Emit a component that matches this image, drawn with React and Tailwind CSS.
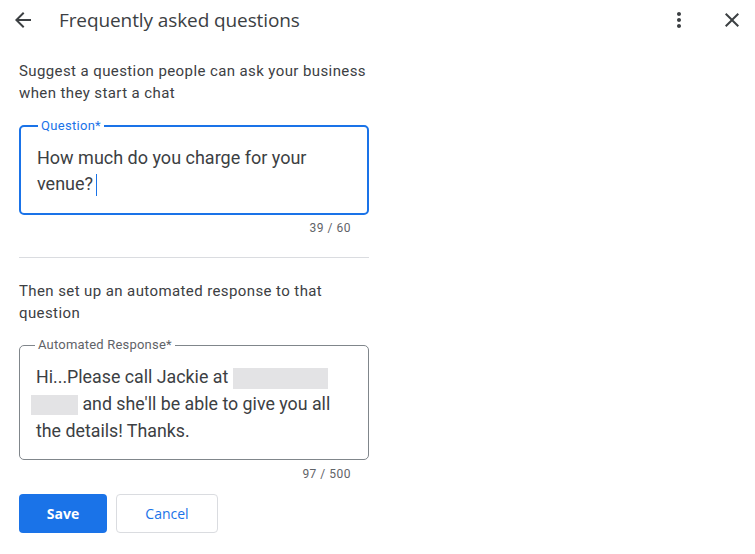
import React from 'react';

function BackArrow() {
  return (
    <svg width="24" height="24" viewBox="0 0 24 24" fill="#3c4043">
      <path d="M20 11H7.83l5.59-5.59L12 4l-8 8 8 8 1.41-1.41L7.83 13H20v-2z" />
    </svg>
  );
}

function MoreVert() {
  return (
    <svg width="24" height="24" viewBox="0 0 24 24" fill="#3c4043">
      <path d="M12 8c1.1 0 2-.9 2-2s-.9-2-2-2-2 .9-2 2 .9 2 2 2zm0 2c-1.1 0-2 .9-2 2s.9 2 2 2 2-.9 2-2-.9-2-2-2zm0 6c-1.1 0-2 .9-2 2s.9 2 2 2 2-.9 2-2-.9-2-2-2z" />
    </svg>
  );
}

function Close() {
  return (
    <svg width="24" height="24" viewBox="0 0 24 24" fill="#3c4043">
      <path d="M19 6.41L17.59 5 12 10.59 6.41 5 5 6.41 10.59 12 5 17.59 6.41 19 12 13.41 17.59 19 19 17.59 13.41 12z" />
    </svg>
  );
}

function Redacted({ className }) {
  return <span className={`inline-block align-middle bg-[#e3e3e5] blur-[0.6px] ${className}`} />;
}

export default function App() {
  return (
    <div className="w-[755px] h-[554px] bg-white font-['Roboto',sans-serif] text-[#3c4043] overflow-hidden">
      <header className="flex items-center h-[40px] pl-[8px] pr-[11px]">
        <button className="w-[30px] h-[30px] flex items-center justify-center">
          <BackArrow />
        </button>
        <h1 className="ml-[21px] text-[19px] font-['Open_Sans',sans-serif] text-[#3c4043] tracking-[-0.1px]">
          Frequently asked questions
        </h1>
        <div className="ml-auto flex items-center gap-[29px]">
          <MoreVert />
          <Close />
        </div>
      </header>

      <div className="w-[350px] ml-[19px] mt-[20px]">
        <p className="text-[15px] leading-[22px] tracking-[0.4px]">
          Suggest a question people can ask your business when they start a chat
        </p>

        <fieldset className="mt-[15px] border-2 border-[#1a73e8] rounded-[5px] px-[16px] pb-[16px] pt-[12px]">
          <legend className="ml-[1px] px-[3px] text-[13px] leading-[14px] tracking-[0.3px] text-[#1a73e8]">Question*</legend>
          <div className="text-[18px] leading-[26px] text-[#3c4043]">
            How much do you charge for your venue?<span className="inline-block w-px h-[22px] bg-[#1a73e8] align-middle ml-[3px]" />
          </div>
        </fieldset>
        <div className="text-right pr-[18px] mt-[4px] text-[12px] text-[#5f6368] tracking-[0.5px]">39 / 60</div>

        <div className="mt-[20px] border-t border-[#dadce0]" />

        <p className="mt-[22px] text-[15px] leading-[22px] tracking-[0.4px]">
          Then set up an automated response to that question
        </p>

        <fieldset className="mt-[14px] border border-[#80868b] rounded-[5px] px-[16px] pb-[15px] pt-[11px]">
          <legend className="ml-[-1px] px-[3px] text-[13px] leading-[14px] tracking-[0.2px] text-[#5f6368]">Automated Response*</legend>
          <div className="text-[17.8px] leading-[27px] text-[#3c4043]">
            Hi...Please call Jackie at <Redacted className="w-[95px] h-[21px]" />{' '}
            <Redacted className="w-[47px] h-[20px] ml-[-5px]" /> and she'll be able to give you all the details! Thanks.
          </div>
        </fieldset>
        <div className="text-right pr-[18px] mt-[5px] text-[12px] text-[#5f6368] tracking-[0.5px]">97 / 500</div>

        <div className="mt-[11px] flex gap-[9px]">
          <button className="w-[88px] h-[39px] rounded-[4px] bg-[#1a73e8] text-white text-[14px] font-bold font-['Open_Sans',sans-serif]">
            Save
          </button>
          <button className="w-[102px] h-[39px] rounded-[4px] border border-[#dadce0] text-[#1a73e8] text-[14px] font-medium font-['Open_Sans',sans-serif]">
            Cancel
          </button>
        </div>
      </div>
    </div>
  );
}
